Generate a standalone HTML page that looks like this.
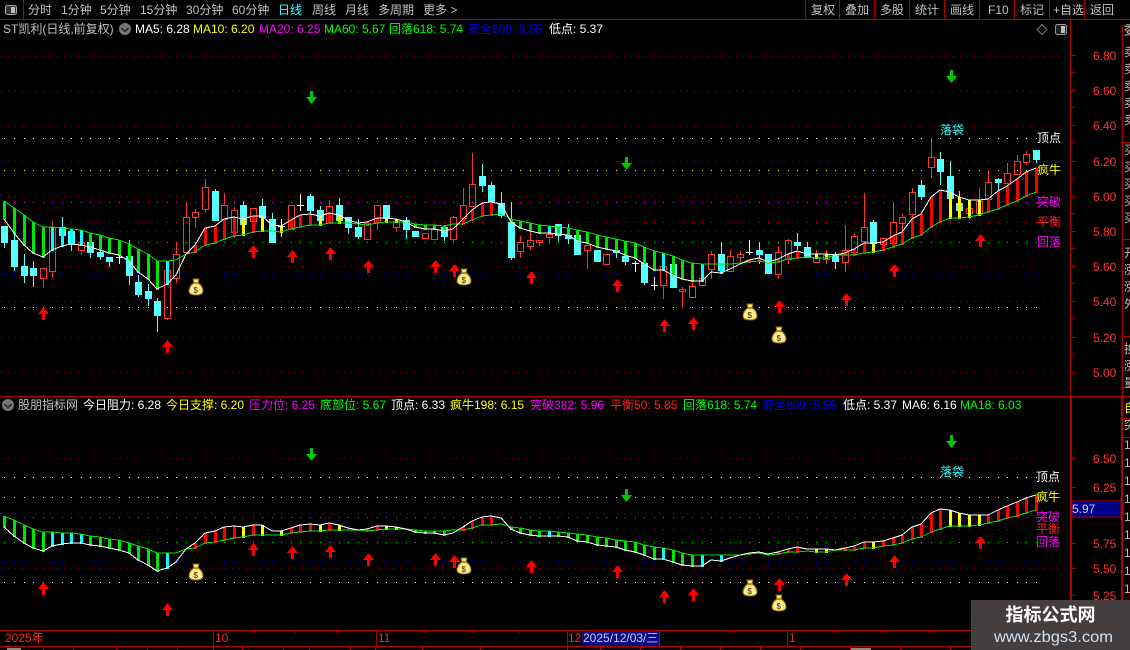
<!DOCTYPE html>
<html><head><meta charset="utf-8"><style>
html,body{margin:0;padding:0;background:#000;width:1130px;height:650px;overflow:hidden}
svg{position:absolute;left:0;top:0}
text{font-family:"Liberation Sans","WenQuanYi Zen Hei","Noto Sans CJK SC",sans-serif;font-size:12px}
.g{fill:#c0c0c0}.w{fill:#fff}.y{fill:#ff0}.m{fill:#f0f}.l{fill:#0f0}.b{fill:#0000f0}.r{fill:#f22}.c{fill:#3ff}.a{fill:#f33;font-size:12px}
</style></head><body>
<svg id="s" width="1130" height="650" viewBox="0 0 1130 650">
<rect width="1130" height="650" fill="#000"/>
<g id="dots" shape-rendering="crispEdges"></g>
<g id="chart" shape-rendering="crispEdges"></g>
<g id="frame" shape-rendering="crispEdges" fill="#b00000">
<rect x="0" y="19" width="1130" height="1"/>
<rect x="23" y="0" width="1" height="19"/>
<rect x="805" y="0" width="1" height="19"/><rect x="839" y="0" width="1" height="19"/><rect x="874" y="0" width="1" height="19"/><rect x="909" y="0" width="1" height="19"/><rect x="944" y="0" width="1" height="19"/><rect x="979" y="0" width="1" height="19"/><rect x="1014" y="0" width="1" height="19"/><rect x="1049" y="0" width="1" height="19"/><rect x="1084" y="0" width="1" height="19"/>
<rect x="1070" y="20" width="1" height="377"/>
<rect x="1122" y="25" width="1" height="372"/>
<rect x="1122" y="25" width="8" height="1"/><rect x="1122" y="35" width="8" height="1"/><rect x="1122" y="142" width="8" height="1"/><rect x="1122" y="239" width="8" height="1"/><rect x="1122" y="336" width="8" height="1"/>
<rect x="0" y="396" width="1130" height="1"/>
<rect x="1070" y="397" width="2" height="253"/>
<rect x="1121" y="397" width="2" height="253"/>
<rect x="1122" y="418" width="8" height="1"/><rect x="1122" y="437" width="8" height="1"/>
<rect x="0" y="630" width="1070" height="1"/>
<rect x="0" y="646" width="1070" height="1"/>
<rect x="213" y="630" width="1" height="16"/><rect x="376" y="630" width="1" height="16"/><rect x="567" y="630" width="1" height="16"/><rect x="787" y="630" width="1" height="16"/>
</g>
<rect x="582" y="631" width="77" height="15" fill="#0a0a80"/>
<rect x="659" y="631" width="1" height="15" fill="#b00000"/>
<rect x="1072" y="501" width="49" height="16" fill="#000088" stroke="#b00000" shape-rendering="crispEdges"/>
<!-- icons -->
<rect x="5.5" y="5.5" width="11" height="9" rx="2" fill="#333" stroke="#aaa"/><rect x="11" y="7" width="4" height="6" fill="#bbb"/>
<rect x="1055.5" y="24.5" width="11" height="10" rx="2" fill="#222" stroke="#999"/><rect x="1061" y="26" width="4" height="7" fill="#bbb"/>
<path d="M1042 24.5L1047 29.5L1042 34.5L1037 29.5Z" fill="none" stroke="#777"/>
<circle cx="125" cy="29" r="6" fill="#777"/><path d="M121.5 28L125 31.5L128.500 28" fill="none" stroke="#222" stroke-width="1.500"/>
<circle cx="8" cy="405" r="6" fill="#777"/><path d="M4.500 404L8 407.500L11.500 404" fill="none" stroke="#222" stroke-width="1.500"/>
<!-- toolbar -->
<g class="g">
<text x="28" y="14">分时</text><text x="61" y="14">1分钟</text><text x="100" y="14">5分钟</text><text x="140" y="14">15分钟</text><text x="186" y="14">30分钟</text><text x="232" y="14">60分钟</text>
<text x="278" y="14" class="c">日线</text><text x="312" y="14">周线</text><text x="345" y="14">月线</text><text x="378" y="14">多周期</text><text x="423" y="14">更多 &gt;</text>
<text x="811" y="14">复权</text><text x="845" y="14">叠加</text><text x="880" y="14">多股</text><text x="915" y="14">统计</text><text x="950" y="14">画线</text><text x="988" y="14">F10</text><text x="1020" y="14">标记</text><text x="1053" y="14">+自选</text><text x="1090" y="14">返回</text>
</g>
<!-- top header -->
<text x="3" y="33" class="g">ST凯利(日线,前复权)</text>
<text x="135" y="33" class="w">MA5: 6.28</text><text x="193" y="33" class="y">MA10: 6.20</text><text x="259" y="33" class="m">MA20: 6.25</text><text x="324" y="33" class="l">MA60: 5.67</text><text x="389" y="33" class="l">回落618: 5.74</text><text x="468" y="33" class="b">安全809: 5.55</text><text x="549" y="33" class="w">低点: 5.37</text>
<!-- lower header -->
<text x="18" y="409" class="g">股朋指标网</text>
<text x="83" y="409" class="w">今日阻力: 6.28</text><text x="166" y="409" class="y">今日支撑: 6.20</text><text x="249" y="409" class="m">压力位: 6.25</text><text x="320" y="409" class="l">底部位: 5.67</text><text x="391" y="409" class="w">顶点: 6.33</text><text x="450" y="409" class="y">疯牛198: 6.15</text><text x="530" y="409" class="m">突破382: 5.96</text><text x="610" y="409" class="r">平衡50: 5.85</text><text x="683" y="409" class="l">回落618: 5.74</text><text x="762" y="409" class="b">安全809: 5.55</text><text x="843" y="409" class="w">低点: 5.37</text><text x="902" y="409" class="w">MA6: 6.16</text><text x="960" y="409" class="l">MA18: 6.03</text>
<!-- axis labels -->
<g class="a">
<text x="1093" y="60" class="a">6.80</text><text x="1093" y="95" class="a">6.60</text><text x="1093" y="130" class="a">6.40</text><text x="1093" y="166" class="a">6.20</text><text x="1093" y="201" class="a">6.00</text><text x="1093" y="236" class="a">5.80</text><text x="1093" y="271" class="a">5.60</text><text x="1093" y="306" class="a">5.40</text><text x="1093" y="342" class="a">5.20</text><text x="1093" y="377" class="a">5.00</text>
<text x="1093" y="463" class="a">6.50</text><text x="1093" y="492" class="a">6.25</text><text x="1093" y="548" class="a">5.75</text><text x="1093" y="573" class="a">5.50</text><text x="1093" y="600" class="a">5.25</text>
</g>
<text x="1072" y="513" fill="#b8d0ff">5.97</text>
<!-- chart labels -->
<text x="1037" y="142" class="w">顶点</text><text x="1037" y="174" class="y">疯牛</text><text x="1037" y="206" class="m">突破</text><text x="1037" y="226" class="r">平衡</text><text x="1037" y="246" class="m">回落</text><text x="940" y="134" class="c">落袋</text>
<text x="1036" y="481" class="w">顶点</text><text x="1036" y="501" class="y">疯牛</text><text x="1036" y="521" class="m">突破</text><text x="1036" y="533" class="r">平衡</text><text x="1036" y="546" class="m">回落</text><text x="940" y="476" class="c">落袋</text>
<!-- time axis -->
<text x="5" y="642" class="r">2025年</text><text x="215" y="642" class="r">10</text><text x="378" y="642" class="r">11</text><text x="568" y="642" class="r">12</text><text x="789" y="642" class="r">1</text>
<text x="583" y="642" fill="#c8c8f0">2025/12/03/三</text>
<!-- right column -->
<g class="g">
<text x="1124" y="34">委</text><text x="1124" y="56">卖</text><text x="1124" y="73">卖</text><text x="1124" y="90">卖</text><text x="1124" y="107">卖</text><text x="1124" y="124">卖</text><text x="1124" y="154">买</text><text x="1124" y="171">买</text><text x="1124" y="188">买</text><text x="1124" y="205">买</text><text x="1124" y="222">买</text>
<text x="1124" y="257">开</text><text x="1124" y="274">涨</text><text x="1124" y="291">涨</text><text x="1124" y="308">外</text>
<text x="1124" y="353">换</text><text x="1124" y="370">涨</text><text x="1124" y="387">量</text>
<text x="1124" y="429">突</text>
<text x="1124" y="449">1</text><text x="1124" y="467">1</text><text x="1124" y="485">1</text><text x="1124" y="503">1</text><text x="1124" y="521">1</text><text x="1124" y="539">1</text><text x="1124" y="557">1</text><text x="1124" y="575">1</text><text x="1124" y="593">1</text>
</g>
<text x="1124" y="412" class="y">自</text>
<g id="marks"></g>
<!-- watermark -->
<rect x="971" y="600" width="159" height="50" fill="#443e3e"/>
<text x="1005.500" y="621" fill="#fff" style="font-size:18px;font-weight:bold">指标公式网</text>
<text x="994" y="642" fill="#cfe0f2" style="font-size:16px" textLength="119" lengthAdjust="spacingAndGlyphs">www.zbgs3.com</text>
</svg>
<script>
var X=function(i){return Math.round(4.4+9.55*i)};
var C="226,226,242,247,c;233,240,266,270,c;254,266,275,282,c;261,268,275,286,c;268,268,278,286,r;221,227,271,277,r;217,227,235,246,c;229,231,243,250,c;230,242,250,254,r;233,242,252,257,c;250,252,256,259,c;257,257,261,266,c;255,257,257,263,w;240,256,275,284,c;275,282,294,296,c;284,291,298,305,c;298,301,315,331,c;270,270,318,319,r;242,254,278,282,r;202,217,252,253,r;209,212,217,227,r;179,187,209,212,r;189,191,220,220,c;193,205,219,219,r;207,210,232,237,r;201,205,224,224,c;208,208,221,232,r;199,206,217,217,c;213,219,242,242,c;219,226,226,236,w;205,205,229,229,r;194,205,205,210,w;194,196,210,225,c;206,210,220,225,c;200,206,223,223,r;198,205,220,223,c;217,217,227,233,c;219,227,236,238,c;222,223,239,239,r;205,205,222,229,r;205,205,218,218,c;219,221,227,231,r;217,220,229,238,c;231,231,236,236,c;233,233,238,238,r;229,229,239,239,r;225,227,236,240,c;216,217,239,242,r;188,205,218,218,r;153,184,206,206,r;164,176,185,191,c;182,185,201,204,c;192,203,215,217,c;202,222,257,259,c;236,242,251,257,r;232,240,246,249,r;240,240,242,245,r;229,234,237,243,r;224,224,235,240,c;224,235,238,243,c;235,235,254,254,c;245,245,250,268,r;250,250,261,261,c;254,254,264,264,r;248,250,252,257,c;256,256,261,264,c;261,263,263,271,w;263,263,282,284,c;277,285,285,289,w;266,266,285,298,r;264,264,287,287,c;287,289,291,307,r;280,286,297,297,r;278,278,285,285,r;251,254,269,278,r;242,254,270,273,c;250,256,271,271,r;251,254,257,261,r;240,252,252,254,w;242,250,254,263,c;254,254,273,273,c;246,252,274,278,r;239,240,259,263,r;233,242,245,249,c;242,247,257,257,c;250,257,262,262,r;250,255,259,263,r;252,254,261,268,c;225,250,262,271,r;233,236,252,255,r;193,227,241,245,r;220,222,243,252,c;238,238,244,248,r;203,222,243,247,r;214,217,223,243,r;188,192,214,220,r;180,185,196,199,c;138,157,167,177,r;152,159,171,184,c;161,176,198,198,c;191,203,210,210,c;200,208,213,219,r;188,201,213,215,r;170,182,199,199,r;178,179,182,191,c;163,173,183,183,r;155,161,174,174,r;151,154,162,164,r;150,150,159,162,c".split(";").map(function(s){return s.split(",")});
/* G,W,colour */
var R="201,219,g;208,233,g;215,245,g;222,253,g;227,257,g;227,250,c;228,246,c;229,244,c;230,245,c;233,247,g;235,250,g;238,253,g;240,255,g;244,261,g;249,272,g;254,279,g;261,289,g;261,284,c;260,275,n;254,254,n;252,245,r;245,228,r;243,226,r;239,219,r;236,217,r;235,219,y;232,216,r;231,216,y;231,225,n;232,226,y;229,220,r;227,215,r;225,214,r;225,216,y;223,213,r;223,215,y;223,220,n;224,223,n;225,222,r;223,218,r;222,218,y;222,219,y;222,222,n;224,227,g;225,229,g;225,229,g;226,231,g;224,229,n;224,219,r;220,210,r;216,203,r;215,202,r;214,204,n;219,222,g;221,228,g;223,231,g;225,233,g;226,233,c;227,234,g;228,235,g;230,241,g;232,243,g;235,247,g;237,249,g;239,251,g;241,255,g;243,258,g;247,264,g;251,270,g;253,270,c;256,275,g;260,279,g;263,281,g;264,281,c;264,272,n;264,273,c;264,269,n;263,264,n;262,260,r;261,258,r;263,262,n;262,259,r;259,254,r;258,251,r;257,254,n;258,254,y;258,254,y;255,255,n;255,253,r;255,249,r;253,243,r;252,243,y;250,242,r;247,236,r;244,232,r;238,219,r;235,214,r;227,197,r;222,190,r;218,192,y;218,197,y;217,200,y;215,200,y;212,199,r;209,191,r;205,186,r;201,179,r;196,172,r;192,168,r".split(";").map(function(s){return s.split(",")});
var COL={g:"#00e600",c:"#00ffff",r:"#ff0000",y:"#ffff00"};
var L=function(y){return Math.round(513.3+(y-197)*0.6264)};
var h="",d="",m="";
function rect(x,y,w,ht,f){return '<rect x="'+x+'" y="'+y+'" width="'+w+'" height="'+ht+'" fill="'+f+'"/>'}
/* grid / dotted */
function dark(y,x2){var s="";for(var x=1;x<x2;x+=7)s+=rect(x,y,1,1,"#a00000");return s}
[56,91,126,161,196,231,266,301,337,372].forEach(function(y){d+=dark(y,1068)});
[458,513,568].forEach(function(y){d+=dark(y,1068)});
[[138,"#fff"],[170,"#ff0"],[202,"#f0f"],[222,"#f00"],[242,"#0f0"],[274,"#00f"],[307,"#fff"],[477,"#fff"],[497,"#ff0"],[517,"#f0f"],[529,"#f00"],[542,"#0f0"],[562,"#00f"],[582,"#fff"]].forEach(function(a){
 for(var i=0;i<=108;i++)d+=rect(X(i),a[0],1,1,a[1]);
});
document.getElementById("dots").innerHTML=d;
/* axis ticks */
[55,90,125,161,196,231,266,301,337,372].forEach(function(y,i){h+=rect(1071,y,5,1,"#b00000");if(i<9)h+=rect(1071,y+17,3,1,"#b00000")});
[458,487,513,543,568,595,622].forEach(function(y){h+=rect(1072,y,4,1,"#b00000")});
[254,295,336,424,472,519,732,834,882,930].forEach(function(x){h+=rect(x,631,1,2,"#b00000")});
[43,73,116,147,177,213,242,283,309,350,375,422,480,567,600,640,680,720,760,800,850,870,900,950].forEach(function(x){h+=rect(x,647,1,3,"#b00000")});
h+=rect(7,648,14,2,"#888")+rect(851,648,20,2,"#888");
/* candles */
C.forEach(function(c,i){
 var x=X(i),wt=+c[0],bt=+c[1],bb=+c[2],wb=+c[3],t=c[4];
 if(t=="w"){h+=rect(x,wt,1,wb-wt+1,"#fff")+rect(x-3,bt,7,1,"#fff");return}
 var f=t=="c"?"#55ffff":"#ff3232";
 h+=rect(x,wt,1,bt-wt,f)+rect(x,bb,1,wb-bb+1,f);
 if(t=="c")h+=rect(x-3,bt,7,bb-bt+1,f);
 else h+=rect(x-3,bt,7,1,f)+rect(x-3,bb,7,1,f)+rect(x-3,bt,1,bb-bt,f)+rect(x+3,bt,1,bb-bt,f);
});
/* ribbons */
function ribbon(map){
 var pw="",pg="";
 R.forEach(function(r,i){
  var x=X(i),g=map(+r[0]),w=map(+r[1]),k=r[2];
  if(k!="n"){var a=Math.min(g,w),b=Math.max(g,w);h+=rect(x-1,a,3,Math.max(b-a,1)+1,COL[k])}
  pw+=(i?"L":"M")+x+" "+w;pg+=(i?"L":"M")+x+" "+g;
 });
 h+='<path d="'+pg+'" fill="none" stroke="#00e600"/><path d="'+pw+'" fill="none" stroke="#fff"/>';
}
ribbon(function(y){return y});
ribbon(L);
document.getElementById("chart").innerHTML=h;
/* arrows */
function up(x,y){return '<path d="M'+(x+.5)+' '+y+'L'+(x+6)+' '+(y+7)+'H'+(x+2)+'V'+(y+13)+'H'+(x-1)+'V'+(y+7)+'H'+(x-5)+'Z" fill="#f00" shape-rendering="crispEdges"/>'}
function dn(x,y){return '<path d="M'+(x+.5)+' '+y+'L'+(x+6)+' '+(y-7)+'H'+(x+2)+'V'+(y-13)+'H'+(x-1)+'V'+(y-7)+'H'+(x-5)+'Z" fill="#00c800" shape-rendering="crispEdges"/>'}
[[43,307],[167,340],[253,245],[292,250],[330,247],[368,260],[435,260],[454,264],[531,271],[617,279],[664,319],[693,317],[779,300],[846,293],[894,264],[980,234]].forEach(function(a){
 m+=up(a[0],a[1])+up(a[0],L(a[1]));
});
[[311,104,461],[626,170,502],[951,83,448]].forEach(function(a){m+=dn(a[0],a[1])+dn(a[0],a[2])});
/* bags */
function bag(x,y){return '<g transform="translate('+x+' '+y+')"><path d="M-3 -8L3 -8L2 -4C6 -2 7 2 7 4C7 7 4 8 0 8C-4 8 -7 7 -7 4C-7 2 -6 -2 -2 -4Z" fill="#ffe97a" stroke="#8a6a10"/><path d="M-3 -4H3" stroke="#a07010" stroke-width="1.500"/><ellipse cx="0" cy="3" rx="4" ry="3.500" fill="#fff3b0"/><text x="-2.500" y="6" style="font-size:8px;font-weight:bold;font-family:\'Liberation Sans\'" fill="#6a4a10">$</text></g>'}
[[196,287],[464,277],[750,312],[779,335],[196,572],[464,566],[750,588],[779,603]].forEach(function(a){m+=bag(a[0],a[1])});
document.getElementById("marks").innerHTML=m;
</script>
</body></html>
